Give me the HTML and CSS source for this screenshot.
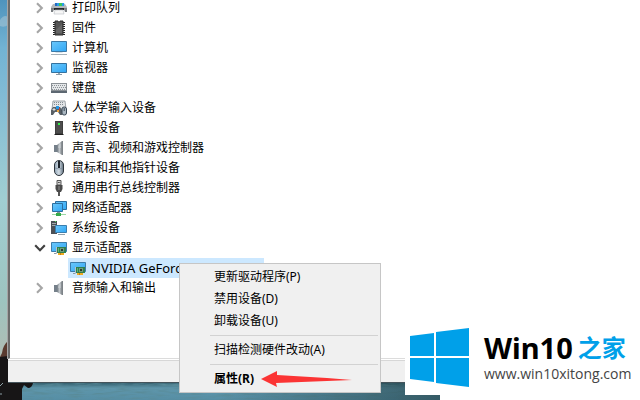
FILE: index.html
```html
<!DOCTYPE html>
<html lang="zh-CN">
<head>
<meta charset="UTF-8" />
<meta name="viewport" content="width=device-width, initial-scale=1" />
<title>设备管理器</title>
<link rel="stylesheet" href="styles.css">
</head>

<body>
  <!-- Shared icons -->
  <svg class="defs" aria-hidden="true">
    <defs>
      <linearGradient id="screen" x1="0" y1="0" x2="1" y2="1">
        <stop offset="0" stop-color="#6cc8fb" />
        <stop offset="1" stop-color="#2fa6f5" />
      </linearGradient>
      <linearGradient id="metal" x1="0" x2="1">
        <stop offset="0" stop-color="#6f7880" />
        <stop offset=".5" stop-color="#c3c8cc" />
        <stop offset="1" stop-color="#7b8186" />
      </linearGradient>
      <linearGradient id="mouseBody" x1="0" x2="1">
        <stop offset="0" stop-color="#8fa3b5" />
        <stop offset=".5" stop-color="#d2dce4" />
        <stop offset="1" stop-color="#5d6d7c" />
      </linearGradient>
      <linearGradient id="sea" x1="0" x2="0" y1="0" y2="1">
        <stop offset="0" stop-color="#35616f" />
        <stop offset=".3" stop-color="#5f96ab" />
        <stop offset="1" stop-color="#568ea5" />
      </linearGradient>
      <linearGradient id="seaShade" x1="0" x2="1" y1="0" y2="0">
        <stop offset=".5" stop-color="#223f45" stop-opacity="0" />
        <stop offset="1" stop-color="#223f45" stop-opacity=".65" />
      </linearGradient>
      <filter id="ripple" x="0" y="0" width="1" height="1">
        <feTurbulence type="fractalNoise" baseFrequency=".06 .45" numOctaves="3" seed="4" />
        <feColorMatrix values="0 0 0 0 .1  0 0 0 0 .26  0 0 0 0 .32  2.6 0 0 0 -1.1" />
      </filter>
    </defs>

    <symbol id="chevron" viewBox="0 0 8 10"><path d="M1.5 1L5.5 5L1.5 9" fill="none" stroke="#a6a6a6" stroke-width="1.8" /></symbol>
    <symbol id="chevron-open" viewBox="0 0 10 8"><path d="M1 1.8L5 5.8L9 1.8" fill="none" stroke="#404040" stroke-width="1.8" /></symbol>

    <symbol id="printer" viewBox="0 0 16 16">
      <path d="M4 3h9l1 3H3z" fill="#2b9be8" /><path d="M8 3h3v3H8z" fill="#36c75a" /><path d="M4 3h2v3H4z" fill="#2469c0" />
      <path d="M2 4h2v2h9V4h1l2 3v2H0V7z" fill="#b4b8bb" /><path d="M0 8h16v4h-2l-1-3H3l-1 3H0z" fill="#7a7e82" />
      <path d="M3 8h10v2H3z" fill="#24272a" /><path d="M4 10h8l1 4H3z" fill="#f6f6f6" stroke="#b9bec2" stroke-width=".6" />
    </symbol>
    <symbol id="chip" viewBox="0 0 16 16">
      <path d="M2 2.5h12M2 4.5h12M2 6.5h12M2 8.5h12M2 10.5h12M2 12.5h12M2 14.5h12" stroke="#222" stroke-width="1" />
      <path d="M4 1h3a1 1 0 0 0 2 0h3v14H4z" fill="#555" stroke="#2c2c2c" stroke-width="1" />
      <path d="M5 10l6-6v9H5z" fill="#666" />
    </symbol>
    <symbol id="computer" viewBox="0 0 16 16">
      <path d="M.5 1.5h15v10H.5z" fill="url(#screen)" stroke="#3b79a7" />
      <path d="M5 12h6l1 1H4z" fill="#d6e0e7" /><path d="M0 14.5h16" stroke="#a5b0b8" />
    </symbol>
    <symbol id="monitor" viewBox="0 0 16 16">
      <path d="M.5 3.500h15v9H.5z" fill="url(#screen)" stroke="#35729f" />
      <path d="M7 13h2v1H7z" fill="#9aa8b2" /><path d="M5 14.500h6" stroke="#8999a5" />
    </symbol>
    <symbol id="keyboard" viewBox="0 0 16 16">
      <path d="M0 3h16v10H0z" fill="#8b9196" /><path d="M1 4h14v6H1z" fill="#e4e7e9" />
      <path d="M1 5.500h14M2 7.500h13M1 9.500h14" stroke="#8d9398" stroke-dasharray="1 1" />
      <path d="M0 11h16v2H0z" fill="#5d6872" />
    </symbol>
    <symbol id="hid" viewBox="0 0 16 16">
      <path d="M2 1h12l1 8H1z" fill="#e2e5e7" stroke="#8a9298" stroke-width=".8" />
      <path d="M3 2.500h10M3 4.500h10" stroke="#858c92" stroke-dasharray="1 1" />
      <path d="M2 7h7l2 3v5H9l-2-3H4l-2 3H0v-5z" fill="#596066" />
      <path d="M3 8v3M1.500 9.500h3" stroke="#d5dadd" /><path d="M5 6h3v3H5z" fill="#2495e5" />
      <path d="M6 10h2v2H6z" fill="#f0a43a" /><path d="M8 8h1v2H8z" fill="#d33b30" />
      <rect x="11" y="7" width="4.5" height="8" rx="2" fill="#aab7c1" stroke="#384653" /><path d="M13.2 8v3" stroke="#384653" />
    </symbol>
    <symbol id="software" viewBox="0 0 16 16">
      <path d="M4 1h8v13H4z" fill="#3e3e3e" /><path d="M5 2h6v11H5z" fill="#4d4d4d" />
      <path d="M7 3h2v2H7z" fill="#35f04b" /><path d="M4 14h8l1 1H3z" fill="#202020" />
    </symbol>
    <symbol id="speaker" viewBox="0 0 16 16">
      <path d="M3 5h3v7H3z" fill="#75808a" /><path d="M6 5l5-4v14l-5-3z" fill="url(#metal)" />
      <path d="M11.500 1v14" stroke="#7d8388" /><path d="M7 6l3-3v5H7z" fill="#d1d6da" opacity=".5" />
    </symbol>
    <symbol id="mouse" viewBox="0 0 16 16">
      <rect x="3.500" y=".5" width="9" height="15" rx="4.500" fill="url(#mouseBody)" stroke="#2e353c" />
      <path d="M8 1v7" stroke="#1c242c" stroke-width="2" /><path d="M4 8q4 2 8 0" fill="none" stroke="#778796" stroke-width=".7" />
    </symbol>
    <symbol id="usb" viewBox="0 0 16 16">
      <path d="M6 .5h4V5H6z" fill="#d8d8d8" stroke="#555" /><path d="M7 2h.8v1H7zM8.400 2h.8v1h-.8z" fill="#333" />
      <path d="M4.500 5h7v4L10 12H6L4.500 9z" fill="#4a4a4a" /><path d="M8 6v4" stroke="#8c8c8c" /><path d="M8 12v4" stroke="#555" stroke-width="2" />
    </symbol>
    <symbol id="network" viewBox="0 0 16 16">
      <path d="M4.500 1.500h11v8h-11z" fill="url(#screen)" stroke="#2c6e9f" />
      <path d="M1.500 3.500h10v8h-10z" fill="url(#screen)" stroke="#2c6e9f" />
      <path d="M6 12h3v1H6z" fill="#87939c" /><path d="M1 14.500h14" stroke="#9ad8a3" /><path d="M5 13h5v3H5z" fill="#35a84a" />
    </symbol>
    <symbol id="system" viewBox="0 0 16 16">
      <path d="M0 1h6v13H0z" fill="#4b5056" /><path d="M1 3.500h4M1 5.500h4" stroke="#a4a9ad" /><path d="M4 1h1v1H4z" fill="#4be35b" />
      <path d="M4.500 5.500h11v7h-11z" fill="url(#screen)" stroke="#3a7eae" /><path d="M7 14.500h7" stroke="#91a0aa" />
    </symbol>
    <symbol id="display" viewBox="0 0 16 16">
      <path d="M.5 2.500h15v9H.5z" fill="url(#screen)" stroke="#3c7cab" />
      <path d="M3 13.500h3" stroke="#8a9aa5" />
      <path d="M5.500 7v7" stroke="#b8c1c6" /><path d="M6 7h9v6H6z" fill="#2f7f50" />
      <path d="M9 8h4v4H9z" fill="#6f9c80" /><path d="M10 9h2v2h-2z" fill="#263f2c" /><path d="M7 8h1v4H7z" fill="#5cb374" />
      <path d="M7 13h6v2H7z" fill="#efac20" /><path d="M9.500 13v2" stroke="#c5830f" />
    </symbol>
  </svg>

  <!-- Wallpaper -->
  <svg class="wallpaper" viewBox="0 0 440 400" preserveAspectRatio="xMinYMax slice" aria-hidden="true">
    <path d="M0 20q4-6 8-3v8q-4 3-8 1z" fill="#c5d5dc" opacity=".4" />
    <path d="M0 383h440v17H0z" fill="url(#sea)" />
    <path d="M0 383h440v17H0z" filter="url(#ripple)" />
    <path d="M0 383h440v17H0z" fill="url(#seaShade)" />
    <path d="M2 353q1-8 6-12v16H0z" fill="#5a3b30" />
    <path d="M0 357l8-1v27h25q-1 5-5 5l-4-3-2 4v11H0z" fill="#171516" />
    <path d="M0 386l3-3M0 394h2" stroke="#8da0a6" />
  </svg>

  <main class="window">
    <ul class="tree">
      <li><button class="toggle" aria-label="展开"><svg><use href="#chevron" /></svg></button><svg class="icon"><use href="#printer" /></svg><span>打印队列</span></li>
      <li><button class="toggle" aria-label="展开"><svg><use href="#chevron" /></svg></button><svg class="icon"><use href="#chip" /></svg><span>固件</span></li>
      <li><button class="toggle" aria-label="展开"><svg><use href="#chevron" /></svg></button><svg class="icon"><use href="#computer" /></svg><span>计算机</span></li>
      <li><button class="toggle" aria-label="展开"><svg><use href="#chevron" /></svg></button><svg class="icon"><use href="#monitor" /></svg><span>监视器</span></li>
      <li><button class="toggle" aria-label="展开"><svg><use href="#chevron" /></svg></button><svg class="icon"><use href="#keyboard" /></svg><span>键盘</span></li>
      <li><button class="toggle" aria-label="展开"><svg><use href="#chevron" /></svg></button><svg class="icon"><use href="#hid" /></svg><span>人体学输入设备</span></li>
      <li><button class="toggle" aria-label="展开"><svg><use href="#chevron" /></svg></button><svg class="icon"><use href="#software" /></svg><span>软件设备</span></li>
      <li><button class="toggle" aria-label="展开"><svg><use href="#chevron" /></svg></button><svg class="icon"><use href="#speaker" /></svg><span>声音、视频和游戏控制器</span></li>
      <li><button class="toggle" aria-label="展开"><svg><use href="#chevron" /></svg></button><svg class="icon"><use href="#mouse" /></svg><span>鼠标和其他指针设备</span></li>
      <li><button class="toggle" aria-label="展开"><svg><use href="#chevron" /></svg></button><svg class="icon"><use href="#usb" /></svg><span>通用串行总线控制器</span></li>
      <li><button class="toggle" aria-label="展开"><svg><use href="#chevron" /></svg></button><svg class="icon"><use href="#network" /></svg><span>网络适配器</span></li>
      <li><button class="toggle" aria-label="展开"><svg><use href="#chevron" /></svg></button><svg class="icon"><use href="#system" /></svg><span>系统设备</span></li>
      <li><button class="toggle" aria-label="折叠"><svg><use href="#chevron-open" /></svg></button><svg class="icon"><use href="#display" /></svg><span>显示适配器</span></li>
      <li class="child"><div class="selected"><svg class="icon"><use href="#display" /></svg><span>NVIDIA GeForce GTX 1050 Ti</span></div></li>
      <li><button class="toggle" aria-label="展开"><svg><use href="#chevron" /></svg></button><svg class="icon"><use href="#speaker" /></svg><span>音频输入和输出</span></li>
    </ul>
    <div class="statusbar"></div>
  </main>

  <!-- Right-click menu -->
  <div class="context-menu" role="menu">
    <button role="menuitem">更新驱动程序(P)</button>
    <button role="menuitem">禁用设备(D)</button>
    <button role="menuitem">卸载设备(U)</button>
    <hr>
    <button role="menuitem">扫描检测硬件改动(A)</button>
    <hr>
    <button role="menuitem" class="default">属性(R)
      <svg class="arrow" viewBox="0 0 92 18" aria-hidden="true"><path d="M0 9L16 1L16 5L66 8L91 10L66 11L15 13L16 17z" fill="#fb3434" /></svg>
    </button>
  </div>

  <!-- Site badge -->
  <div class="brand">
    <svg class="brand-logo" viewBox="0 0 59 59" aria-hidden="true">
      <path d="M0 8L24 5V28H0zM26 4L59 0V28H26zM0 30H24V54L0 51zM26 30H59V59L26 55z" fill="#00a0e9" />
    </svg>
    <div class="brand-text">
      <div class="brand-name">Win10<span>之家</span></div>
      <div class="brand-url">www.win10xitong.com</div>
    </div>
  </div>
</body>
</html>
```

FILE: styles.css
```css
* { box-sizing: border-box; margin: 0; padding: 0; }
body {
  font-family: "Noto Sans", "Noto Sans CJK SC", sans-serif;
  font-size: 12px; line-height: 20px; color: #000;
  background: #fff;
  display: flex; flex-direction: column;
  height: 100vh; overflow: hidden;
  padding: 0 0 17px 8px;
  position: relative;
}
button { font: inherit; color: inherit; background: none; border: 0; }
svg { display: block; }
.defs { position: absolute; width: 0; height: 0; }

/* Wallpaper */
.wallpaper {
  position: absolute; left: 0; bottom: 0;
  width: 440px; height: 100%;
  background: linear-gradient(#4f93bc, #72b3d3 12%, #83bcd5 25%, #a0ced2 50%, #9dc4c0 75%, #aebdb5 88%);
}

/* Device manager window */
.window {
  position: relative; flex: 1; min-height: 0;
  display: flex; flex-direction: column;
  background: #f0f0f0;
  border-bottom: 1px solid #45545b;
}
.tree {
  flex: 1; min-height: 0; list-style: none;
  background: #fff;
  border-left: 2px solid #6b6b6b;
  border-bottom: 1px solid #dcdcdc;
  box-shadow: -1px 0 #a5a5a5;
  padding-left: 24px;
}
.tree li { display: flex; align-items: center; height: 20px; white-space: nowrap; }
.tree li:first-child { margin-top: -2px; }
.toggle { width: 12px; height: 12px; margin-right: 5px; }
.toggle svg { width: 12px; height: 12px; }
.icon { width: 16px; height: 16px; margin-right: 5px; flex: none; }
.tree .child { padding-left: 34px; font-size: 13px; }
.selected {
  display: flex; align-items: center;
  width: 196px; height: 20px; padding-left: 2px;
  background: #cce8ff;
}
.statusbar {
  height: 23px;
  border-top: 1px solid #fff;
  box-shadow: inset 0 1px #d7d7d7;
}

/* Context menu */
.context-menu {
  position: absolute; left: 179px; top: 263px;
  width: 202px; padding: 2px 2px 2px 30px;
  background: #f0f0f0; border: 1px solid #c6c6c6;
  display: flex; flex-direction: column;
}
.context-menu button {
  display: flex; align-items: center;
  height: 22px; padding-left: 4px;
  text-align: left; white-space: nowrap;
}
.context-menu hr { border: 0; height: 1px; margin: 3px 0; background: #d2d2d2; }
.context-menu .default { font-weight: bold; }
.arrow { width: 92px; height: 18px; margin-left: 7px; }

/* Site badge */
.brand {
  position: absolute; right: 0; bottom: 5px;
  width: 235px; height: 75px; padding-left: 5px;
  display: flex; align-items: center; gap: 15px;
  background: #fff;
}
.brand-logo { width: 59px; height: 59px; flex: none; }
.brand-name {
  display: flex; align-items: center; gap: 5px;
  font-size: 29px; line-height: 32px; font-weight: bold;
}
.brand-name span { font-size: 24px; color: #00a0e9; }
.brand-url { font-family: "Open Sans", sans-serif; font-size: 14px; line-height: 20px; color: #444; }
```
